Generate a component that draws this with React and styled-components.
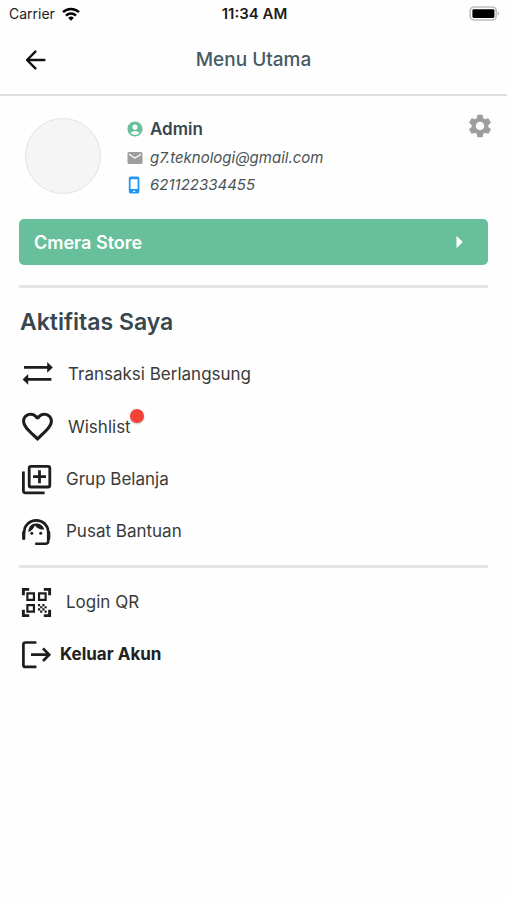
import React from 'react'
import styled, {createGlobalStyle, css} from 'styled-components'
import {
  MdAccountCircle,
  MdArrowRight,
  MdEmail,
  MdFavoriteBorder,
  MdQrCodeScanner,
  MdSettings
} from 'react-icons/md'

const GlobalStyle = createGlobalStyle`
  * {
    box-sizing: border-box;
  }
  body {
    margin: 0;
    background-color: #fefefe;
    font-family: Inter, Roboto, sans-serif;
    color: #2b2d2f;
  }
  button {
    border: none;
    padding: 0;
    background: none;
    font: inherit;
    color: inherit;
    cursor: pointer;
  }
  svg {
    display: block;
    flex-shrink: 0;
  }
`

const StyledStatusBar = styled.div`
  display: grid;
  grid-template-columns: 1fr auto 1fr;
  align-items: center;
  height: 27px;
  padding: 0 7px 0 9px;
  font-size: 14px;
  color: #1c1c1c;
  > .carrier {
    display: flex;
    align-items: center;
    gap: 7px;
  }
  > .time {
    font-size: 15px;
    font-weight: 600;
  }
  > .battery {
    justify-self: end;
  }
`

const StyledHeader = styled.header`
  display: grid;
  grid-template-columns: 48px 1fr 48px;
  align-items: center;
  height: 69px;
  padding: 0 12px 2px;
  border-bottom: 2px solid #dedede;
  > h1 {
    margin: 0;
    text-align: center;
    font-size: 19px;
    font-weight: 500;
    color: #455a64;
  }
`

const BackButton = styled.button`
  display: flex;
  align-items: center;
  justify-content: center;
  height: 48px;
`

const Content = styled.main`
  padding: 0 19px;
`

const StyledProfile = styled.section`
  display: flex;
  align-items: flex-start;
  padding: 22px 0 21px 6px;
`

const Avatar = styled.div`
  width: 76px;
  height: 76px;
  border: 1px solid #e2e2e2;
  border-radius: 50%;
  background-color: #f5f5f5;
`

const ProfileInfo = styled.div`
  flex: 1;
  display: flex;
  flex-direction: column;
  margin: -1px 0 0 25px;
`

const InfoLine = styled.div`
  display: flex;
  align-items: center;
  gap: 6px;
  height: 27px;
  font-size: 15px;
  font-style: italic;
  color: #4a5357;
  ${props => props.$name && css`
    height: 24px;
    margin-bottom: 3px;
    font-size: 17px;
    font-style: normal;
    font-weight: 600;
    color: #37474f;
  `}
`

const SettingsButton = styled.button`
  align-self: flex-start;
  margin: -6px -6px 0 0;
  color: #9e9e9e;
`

const StoreButton = styled.button`
  display: flex;
  align-items: center;
  justify-content: space-between;
  width: 100%;
  height: 46px;
  && {
    padding: 0 14px 0 15px;
    border-radius: 5px;
    background-color: #67bf9b;
    color: white;
    font-size: 18px;
    font-weight: 600;
  }
`

const Divider = styled.hr`
  height: 3px;
  margin: ${props => props.$space} 0;
  border: none;
  background-color: #e4e4e4;
`

const SectionTitle = styled.h2`
  margin: 0;
  padding: 0 0 11px 1px;
  font-size: 23px;
  line-height: 28px;
  font-weight: 600;
  color: #37474f;
`

const MenuItem = styled.button`
  display: flex;
  align-items: center;
  gap: 12px;
  width: 100%;
  height: ${props => props.$tall ? '53px' : '52px'};
  && {
    font-size: 17px;
    color: #3a3a3a;
  }
  > svg {
    color: #1d1d1d;
  }
  ${props => props.$strong && css`
    && {
      gap: 6px;
      font-weight: 700;
      color: #212121;
    }
  `}
`

const BadgeLabel = styled.span`
  position: relative;
  &::after {
    content: '';
    position: absolute;
    top: -8px;
    right: -13px;
    width: 14px;
    height: 14px;
    border-radius: 50%;
    background-color: #f44336;
    box-shadow: 0 1px 2px rgba(0, 0, 0, 0.25);
  }
`

function WifiIcon() {
  return (
    <svg width='18' height='14' viewBox='0 0 18 14' fill='none' stroke='#000' strokeWidth='2.5'>
      <path d='M1 5.2a11.4 11.4 0 0 1 16 0' />
      <path d='M4 8.6a7.1 7.1 0 0 1 10 0' />
      <path d='M9 13.8l-2.8-2.9a4 4 0 0 1 5.6 0z' fill='#000' stroke='none' />
    </svg>
  )
}

function BatteryIcon() {
  return (
    <svg className='battery' width='31' height='15' viewBox='0 0 31 15'>
      <rect x='1.2' y='1' width='26' height='13' rx='4' fill='#fff' stroke='#bdbdbd' strokeWidth='1.6' />
      <rect x='3.4' y='3.2' width='22' height='8.8' rx='1.4' fill='#000' />
      <path d='M28.8 5.2a2.6 2.6 0 0 1 0 4.6z' fill='#b5b5b5' />
    </svg>
  )
}

function BackIcon() {
  return (
    <svg width='22' height='22' viewBox='0 0 22 22' fill='none' stroke='#111' strokeWidth='2.4' strokeLinecap='round' strokeLinejoin='round'>
      <path d='M10.4 2.6L2 11l8.4 8.4M2.4 11h17' />
    </svg>
  )
}

function PhoneIcon() {
  return (
    <svg width='18' height='18' viewBox='0 0 18 18'>
      <path
        d='M5 .4h6.2a2.2 2.2 0 0 1 2.2 2.2v12.8a2.2 2.2 0 0 1-2.2 2.2H5a2.2 2.2 0 0 1-2.2-2.2V2.6A2.2 2.2 0 0 1 5 .4zM4.6 3.2v9.8h7V3.2z'
        fill='#2196f3'
        fillRule='evenodd'
      />
      <path d='M7.2 15.3h1.8' stroke='#fff' strokeWidth='1.3' />
    </svg>
  )
}

function TransferIcon() {
  return (
    <svg width='37' height='37' viewBox='0 0 37 37' fill='currentColor'>
      <path d='M5 11h23.2V7l5.6 5.4-5.6 5.4v-4H5z' />
      <path d='M32.4 23H9.2v-4l-5.6 5.4 5.6 5.4v-4h23.2z' />
    </svg>
  )
}

function GroupIcon() {
  return (
    <svg width='35' height='35' viewBox='0 0 35 35' fill='none' stroke='currentColor' strokeWidth='2.8'>
      <rect x='10.2' y='4.4' width='20.6' height='20.6' rx='1.8' />
      <path d='M20.5 8.2v13M14 14.7h13' />
      <path d='M4.4 9.4v19.4a2 2 0 0 0 2 2h19.2' />
    </svg>
  )
}

function SupportIcon() {
  return (
    <svg width='35' height='35' viewBox='0 0 35 35' fill='none' stroke='currentColor'>
      <path d='M5.2 19v-1.2a12 11.4 0 0 1 24 0v9.6a2.4 2.4 0 0 1-2.4 2.4H16.2' strokeWidth='2.6' />
      <path d='M4.7 18.4v6M29.7 18.4v6' strokeWidth='3.2' strokeLinecap='round' />
      <path
        d='M9.3 18c.1-5.2 3.2-8.6 7.9-8.6 4.3 0 7.4 2.6 8.1 6.2-4.3.1-7.5-1.4-9.4-4.2-1.1 2.9-3.3 5.4-6.6 6.6z'
        fill='currentColor'
        stroke='none'
      />
      <circle cx='12.8' cy='19.2' r='1.5' fill='currentColor' stroke='none' />
      <circle cx='21.7' cy='19.2' r='1.5' fill='currentColor' stroke='none' />
    </svg>
  )
}

function LogoutIcon() {
  return (
    <svg width='35' height='35' viewBox='0 0 35 35' fill='none' stroke='currentColor' strokeWidth='2.7'>
      <path d='M17.4 5.5H6.4a2 2 0 0 0-2 2v20.4a2 2 0 0 0 2 2h11' />
      <path d='M12 17.7h18M24 11.4l6.2 6.3-6.2 6.3' />
    </svg>
  )
}

function App() {
  return (
    <>
      <GlobalStyle />
      <StyledStatusBar>
        <div className='carrier'>Carrier <WifiIcon /></div>
        <div className='time'>11:34 AM</div>
        <BatteryIcon />
      </StyledStatusBar>
      <StyledHeader>
        <BackButton aria-label='Kembali'><BackIcon /></BackButton>
        <h1>Menu Utama</h1>
      </StyledHeader>
      <Content>
        <StyledProfile>
          <Avatar />
          <ProfileInfo>
            <InfoLine $name><MdAccountCircle size={18} color='#67bf9b' />Admin</InfoLine>
            <InfoLine><MdEmail size={18} color='#9e9e9e' />g7.teknologi@gmail.com</InfoLine>
            <InfoLine><PhoneIcon />621122334455</InfoLine>
          </ProfileInfo>
          <SettingsButton aria-label='Pengaturan'><MdSettings size={28} /></SettingsButton>
        </StyledProfile>
        <StoreButton>Cmera Store <MdArrowRight size={30} /></StoreButton>
        <Divider $space='20px' />
        <SectionTitle>Aktifitas Saya</SectionTitle>
        <MenuItem $tall><TransferIcon />Transaksi Berlangsung</MenuItem>
        <MenuItem $tall><MdFavoriteBorder size={37} /><BadgeLabel>Wishlist</BadgeLabel></MenuItem>
        <MenuItem><GroupIcon />Grup Belanja</MenuItem>
        <MenuItem><SupportIcon />Pusat Bantuan</MenuItem>
        <Divider $space='8px' />
        <MenuItem><MdQrCodeScanner size={35} />Login QR</MenuItem>
        <MenuItem $strong><LogoutIcon />Keluar Akun</MenuItem>
      </Content>
    </>
  )
}

export default App
